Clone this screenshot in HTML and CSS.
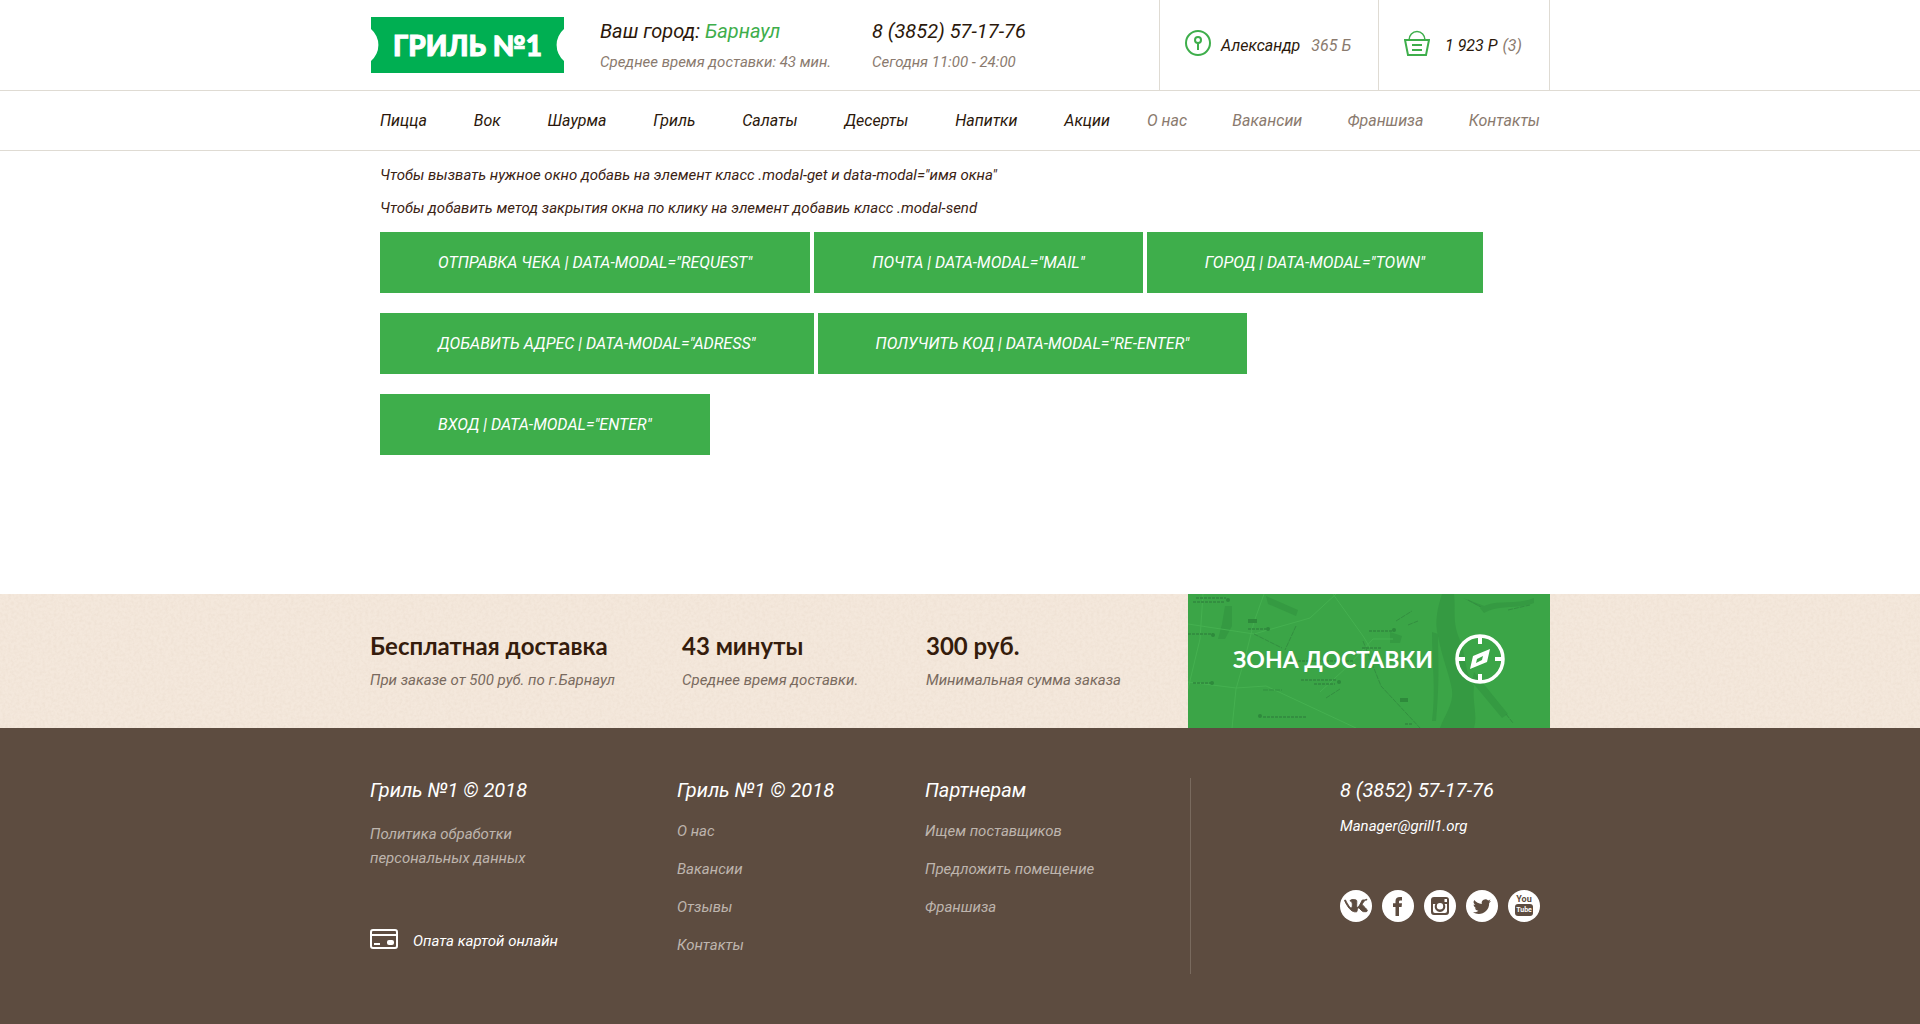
FILE: index.html
```html
<!DOCTYPE html>
<html lang="ru">
<head>
<meta charset="utf-8">
<title>Гриль №1</title>
<link rel="stylesheet" href="styles.css">
</head>
<body>
<header class="header">
  <div class="container header-row">
    <a class="logo" href="#">
      <svg class="logo-shape" viewBox="0 0 193 56" aria-hidden="true"><path fill="#00af52" d="M0 0H193V12A21 21 0 0 0 193 44V56H0V44A21 21 0 0 0 0 12Z"/></svg>
      <span class="logo-text">ГРИЛЬ №1</span>
    </a>
    <div class="info info-city">
      <div class="info-title">Ваш город: <a class="city" href="#">Барнаул</a></div>
      <div class="info-note">Среднее время доставки: 43 мин.</div>
    </div>
    <div class="info">
      <a class="info-title" href="tel:83852571776">8 (3852) 57-17-76</a>
      <div class="info-note">Сегодня 11:00 - 24:00</div>
    </div>
    <a class="panel panel-user" href="#">
      <svg width="26" height="26" viewBox="0 0 26 26" fill="none" stroke="#3eae4b" stroke-width="2" aria-hidden="true"><circle cx="13" cy="13" r="12"/><circle cx="13" cy="10" r="3"/><path d="M13 13V20"/></svg>
      <span class="panel-main">Александр</span>
      <span class="panel-note">365 Б</span>
    </a>
    <a class="panel panel-cart" href="#">
      <svg width="26" height="26" viewBox="0 0 26 26" fill="none" stroke="#3eae4b" stroke-width="2" aria-hidden="true"><path d="M1 10H25L22 25H4Z"/><path stroke-width="1.5" d="M5 10A8 8.5 0 0 1 21 10"/><path d="M8 15H18M8 20H18"/></svg>
      <span class="panel-main">1 923 Р</span>
      <span class="panel-note">(3)</span>
    </a>
  </div>
</header>
<nav class="nav">
  <div class="container nav-row">
    <ul class="menu">
      <li><a href="#">Пицца</a></li><li><a href="#">Вок</a></li><li><a href="#">Шаурма</a></li><li><a href="#">Гриль</a></li><li><a href="#">Салаты</a></li><li><a href="#">Десерты</a></li><li><a href="#">Напитки</a></li><li><a href="#">Акции</a></li>
    </ul>
    <ul class="menu menu-muted">
      <li><a href="#">О нас</a></li><li><a href="#">Вакансии</a></li><li><a href="#">Франшиза</a></li><li><a href="#">Контакты</a></li>
    </ul>
  </div>
</nav>
<main class="container main">
  <p>Чтобы вызвать нужное окно добавь на элемент класс .modal-get и data-modal="имя окна"</p>
  <p>Чтобы добавить метод закрытия окна по клику на элемент добавиь класс .modal-send</p>
  <div class="buttons">
    <button class="btn" type="button">Отправка чека | data-modal="request"</button>
    <button class="btn" type="button">Почта | data-modal="mail"</button>
    <button class="btn" type="button">Город | data-modal="town"</button>
    <button class="btn" type="button">Добавить адрес | data-modal="adress"</button>
    <button class="btn" type="button">Получить код | data-modal="re-enter"</button>
    <button class="btn" type="button">Вход | data-modal="enter"</button>
  </div>
</main>
<section class="delivery">
  <svg class="paper" aria-hidden="true">
    <filter id="grain" x="0" y="0" width="100%" height="100%"><feTurbulence type="fractalNoise" baseFrequency="0.35" numOctaves="3" seed="4"/><feColorMatrix values="0 0 0 0 0.55  0 0 0 0 0.4  0 0 0 0 0.28  0.2 0 0 0 -0.07"/></filter>
    <rect width="100%" height="100%" filter="url(#grain)"/>
  </svg>
  <div class="container delivery-row">
    <div class="fact"><h2>Бесплатная доставка</h2><p>При заказе от 500 руб. по г.Барнаул</p></div>
    <div class="fact"><h2>43 минуты</h2><p>Среднее время доставки.</p></div>
    <div class="fact"><h2>300 руб.</h2><p>Минимальная сумма заказа</p></div>
    <a class="zone" href="#">
      <svg class="zone-map" viewBox="0 0 362 134" preserveAspectRatio="xMidYMid slice" aria-hidden="true">
        <g fill="#359a42">
          <path d="M254 0H266C268 18 264 28 272 46C279 66 276 76 286 92C284 108 290 122 286 134H252C256 122 266 110 264 96C262 82 254 64 250 42C246 28 250 12 254 0Z"/>
          <path d="M244 38L250 40C250 62 252 86 248 127H244C248 96 244 70 244 38Z"/>
          <path d="M286 78L320 120L314 124L284 88ZM292 14C308 4 326 12 346 4V9C328 16 312 10 296 19ZM275 4L302 14L292 13Z"/>
          <path d="M78 2L110 16L108 22L80 10ZM37 12H44V32L37 45H30L34 30ZM202 38L214 42L212 49H202Z"/>
        </g>
        <g fill="none" stroke="#45b050" stroke-width="1">
          <path d="M15 0L12 45L0 95M0 30L66 40L122 24L148 0M76 0L66 28L58 60L48 95L44 134M0 88L48 94L78 92L168 134M145 0L175 42L186 60M132 98L160 72L185 45H205"/>
        </g>
        <g fill="none" stroke="#338f40" stroke-width="1">
          <path d="M175 47L193 92L232 134M108 32L97 56M66 40L94 54M208 27L224 17M220 31L230 27M138 104L152 95M75 96H94M320 16L342 11M280 6L293 13M318 120L325 129" stroke-dasharray="5 1"/>
          <path d="M8 4H38M5 8H36M0 40H25M60 35H78M181 37H205M98 67H165M113 86H149M126 90H147M5 89H24M75 123H118M217 130H225M174 54H193" stroke-width="2" stroke-dasharray="3 1"/>
        </g>
        <g fill="#2e8a3b">
          <circle cx="40" cy="6" r="2"/><circle cx="80" cy="35" r="2"/><circle cx="25" cy="41" r="2"/><circle cx="206" cy="36" r="2"/><circle cx="151" cy="88" r="2"/><circle cx="24" cy="89" r="2"/><circle cx="72" cy="122" r="2"/>
          <path d="M60 25H69V29H60ZM212 104H220V108H212Z"/>
        </g>
      </svg>
      <span class="zone-text">ЗОНА ДОСТАВКИ</span>
      <svg class="compass" width="50" height="50" viewBox="0 0 50 50" fill="none" stroke="#fff" aria-hidden="true"><circle cx="25" cy="25" r="23" stroke-width="3.500"/><path stroke-width="4" d="M25 2V10M25 40V48M2 25H10M40 25H48"/><path fill="#fff" stroke="none" fill-rule="evenodd" d="M35 15L32 28L15 35L18 22ZM28 22L22 25L21 29L27 26Z"/></svg>
    </a>
  </div>
</section>
<footer class="footer">
  <div class="container footer-row">
    <div class="col">
      <h3>Гриль №1 © 2018</h3>
      <a class="policy" href="#">Политика обработки<br>персональных данных</a>
      <a class="pay" href="#">
        <svg width="28" height="20" viewBox="0 0 28 20" fill="none" stroke="#fff" stroke-width="2" aria-hidden="true"><rect x="1" y="1" width="26" height="18" rx="2"/><path d="M1 6H27"/><path d="M4 15H10"/><rect x="17" y="11" width="7" height="5" rx="2" fill="#fff" stroke="none"/></svg>
        <span>Опата картой онлайн</span>
      </a>
    </div>
    <div class="col">
      <h3>Гриль №1 © 2018</h3>
      <ul class="links"><li><a href="#">О нас</a></li><li><a href="#">Вакансии</a></li><li><a href="#">Отзывы</a></li><li><a href="#">Контакты</a></li></ul>
    </div>
    <div class="col">
      <h3>Партнерам</h3>
      <ul class="links"><li><a href="#">Ищем поставщиков</a></li><li><a href="#">Предложить помещение</a></li><li><a href="#">Франшиза</a></li></ul>
    </div>
    <div class="col col-contacts">
      <h3>8 (3852) 57-17-76</h3>
      <a class="mail" href="mailto:Manager@grill1.org">Manager@grill1.org</a>
      <div class="social">
        <a href="#" aria-label="ВКонтакте"><svg viewBox="0 0 32 32"><path d="M14.8 21.8H16.2S16.8 21.7 17 21.4C17.3 21.1 17.2 20.5 17.2 20.5S17.2 18.2 18.3 17.9C19.4 17.6 20.7 20.1 22.2 21.1C23.3 21.9 24.1 21.7 24.1 21.7L26 21.7S28 21.5 27 19.9C26.9 19.8 26.4 18.7 24 16.5C21.5 14.2 21.8 14.5 24.8 10.5C26.6 8.2 27.3 10 27 10H22.9S22.5 10 22.2 10.2C22 10.4 21.8 10.7 21.8 10.7S21.1 12.6 20.2 14.1C18.3 17.3 17.6 17.5 17.2 17.3C16.5 16.8 16.7 15.5 16.7 14.5C16.7 11.5 17.2 10.2 15.8 9.9C14.3 9.5 11.9 9.5 10.9 10C10.2 10.3 9.7 11 10 11C10.4 11.1 11.3 11.3 11.7 11.9C12.3 12.7 12.3 14.5 12.3 14.5S12.6 17.5 11.5 17.8C10.7 18.2 9.7 17.4 7.5 13.8C6.4 12 5.5 10 5.5 10H4.8C4.5 10.5 4.6 10.7 5 11.5S8.3 18.4 11.9 20.8C14.2 22 14.8 21.8 14.8 21.8Z" stroke="#5d4c40"/></svg></a>
        <a href="#" aria-label="Facebook"><svg viewBox="0 0 32 32"><path d="M13.5 26V17H11V13.2H13.5V11C13.5 8.2 15 7 18 7H20V10.5H18.5C17.3 10.5 17 11 17 12V13.2H20L19.6 17H17V26Z"/></svg></a>
        <a href="#" aria-label="Instagram"><svg viewBox="0 0 32 32"><path fill-rule="evenodd" d="M10 7H22Q25 7 25 10V22Q25 25 22 25H10Q7 25 7 22V10Q7 7 10 7ZM9 14V21Q9 23 11 23H21Q23 23 23 21V14H20.6A5.3 5.3 0 1 1 11.4 14ZM16 13A3.2 3.2 0 1 0 16 19.4A3.2 3.2 0 1 0 16 13ZM20.5 9V12H23V9Z"/></svg></a>
        <a href="#" aria-label="Twitter"><svg viewBox="0 0 32 32"><path d="M25 11C24.3 11.3 23.6 11.5 22.9 11.6C23.7 11.1 24.2 10.4 24.5 9.6C23.7 10 23 10.3 22.1 10.5A3.7 3.7 0 0 0 15.8 13.9C12.7 13.7 10 12.3 8.2 10A3.7 3.7 0 0 0 9.3 14.9C8.7 14.9 8.1 14.7 7.6 14.5C7.6 16.3 8.9 17.8 10.6 18.2C10.1 18.3 9.5 18.3 8.9 18.2C9.4 19.7 10.8 20.7 12.4 20.8C10.8 22 9 22.5 7 22.3C14 26.5 23.2 22.3 23.2 12.9C23.9 12.4 24.5 11.8 25 11Z"/></svg></a>
        <a class="yt" href="#" aria-label="YouTube"><span class="yt-you">You</span><span class="yt-tube">Tube</span></a>
      </div>
    </div>
  </div>
</footer>
</body>
</html>
```
FILE: styles.css
```css
* { box-sizing: border-box; }
body {
  margin: 0;
  min-height: 100vh;
  display: flex;
  flex-direction: column;
  background: #fff;
  color: #3b2314;
  font: italic 15px/24px Roboto, "Liberation Sans", sans-serif;
}
a { color: inherit; text-decoration: none; }
ul { list-style: none; margin: 0; padding: 0; }
h2, h3, p { margin: 0; }
.container { width: 100%; max-width: 1180px; margin: 0 auto; }

.header { border-bottom: 1px solid #dfdbd3; }
.header-row { display: flex; min-height: 90px; }
.logo { position: relative; align-self: center; width: 193px; height: 56px; margin-left: 1px; display: flex; align-items: center; justify-content: center; }
.logo-shape { position: absolute; inset: 0; width: 100%; height: 100%; }
.logo-text { position: relative; color: #fff; font: normal 900 28px/36px Lato, sans-serif; -webkit-text-stroke: 1px #fff; }
.info { margin-left: 36px; padding-top: 18px; color: #2b180b; white-space: nowrap; }
.info-city { width: 236px; }
.info-title { display: block; font-size: 20px; line-height: 26px; }
.city { color: #3eae4b; }
.info-note { margin-top: 6px; color: #8a7a6e; }
.panel { display: flex; align-items: center; border-left: 1px solid #dfdbd3; color: #2b180b; font-size: 16px; white-space: nowrap; padding-bottom: 4px; }
.panel-main { padding-top: 6px; }
.panel-note { padding-top: 6px; color: #8a7a6e; }
.panel-user { width: 219px; margin-left: auto; padding-left: 25px; }
.panel-user .panel-main { margin: 0 11px 0 10px; }
.panel-cart { width: 172px; padding-left: 25px; border-right: 1px solid #dfdbd3; }
.panel-cart .panel-main { margin: 0 5px 0 15px; }

.nav { border-bottom: 1px solid #dfdbd3; }
.nav-row { display: flex; justify-content: space-between; padding: 0 10px; }
.menu { display: flex; justify-content: space-between; flex: 0 1 730px; font-size: 16px; line-height: 59px; color: #2b180b; }
.menu-muted { flex-basis: 393px; color: #8a7a6e; }

.main { flex: 1 0 auto; padding: 12px 10px 119px; }
.main > p { margin-bottom: 9px; }
.buttons { display: flex; flex-wrap: wrap; gap: 20px 4px; margin-top: 12px; }
.btn { border: 0; padding: 19px 58px 18px; background: #3eae4b; color: #fff; font: inherit; font-size: 16px; text-transform: uppercase; }

.delivery { position: relative; background: #f4e8dc; }
.paper { position: absolute; inset: 0; width: 100%; height: 100%; }
.delivery-row { position: relative; display: grid; grid-template-columns: 312px 244px 262px 362px; min-height: 134px; }
.fact { padding-top: 37px; color: #796a5e; }
.fact h2 { color: #351c0c; font: normal 700 24px/30px Lato, sans-serif; white-space: nowrap; }
.fact p { margin-top: 7px; }
.zone { position: relative; display: flex; align-items: center; justify-content: space-between; padding: 0 45px 4px; background: #3ba547; color: #fff; }
.zone-map { position: absolute; inset: 0; width: 100%; height: 100%; }
.zone-text { position: relative; font: normal 700 23px/30px Lato, sans-serif; white-space: nowrap; }
.compass { position: relative; }

.footer { background: #5d4c40; color: #fff; }
.footer-row { display: grid; grid-template-columns: 307px 248px 265px 360px; padding: 50px 0; min-height: 296px; }
.col h3 { font-size: 20px; line-height: 24px; font-weight: 400; }
.policy { display: block; margin-top: 20px; color: #beb5ae; }
.pay { display: flex; gap: 15px; align-items: flex-start; margin-top: 59px; }
.links { margin-top: 10px; color: #beb5ae; }
.links li { line-height: 38px; }
.col-contacts { border-left: 1px solid #796a5e; padding-left: 149px; }
.mail { display: block; margin-top: 12px; }
.social { display: flex; gap: 10px; margin-top: 52px; }
.social a { flex: none; width: 32px; height: 32px; border-radius: 50%; background: #fff; color: #5d4c40; }
.social svg { display: block; width: 32px; height: 32px; fill: #5d4c40; }
.social .yt { display: flex; flex-direction: column; align-items: center; font: normal 700 9px/10px Roboto, sans-serif; padding-top: 4px; }
.yt-tube { width: 18px; border-radius: 3px; background: #5d4c40; color: #fff; text-align: center; font-size: 7px; line-height: 12px; }
```
